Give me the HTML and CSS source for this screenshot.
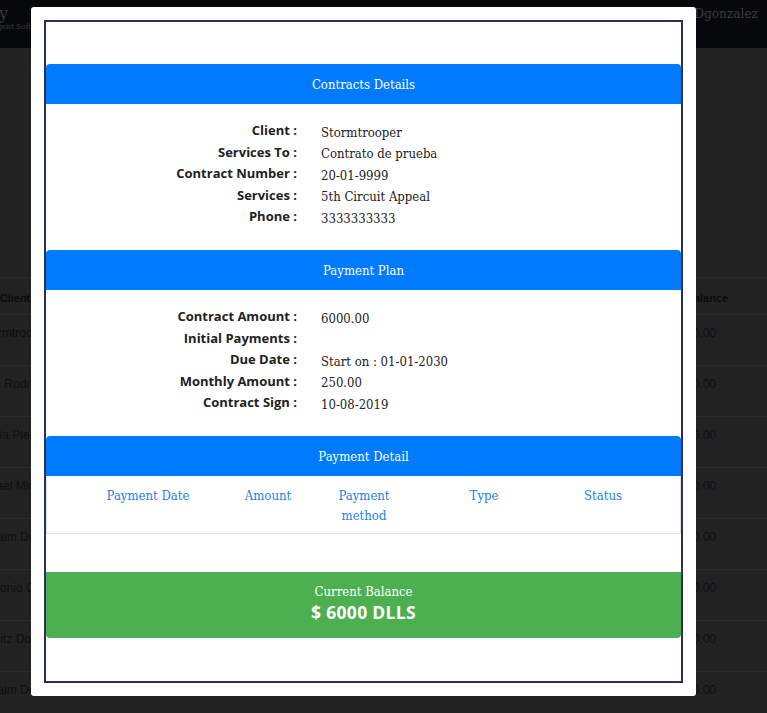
FILE: index.html
```html
<!DOCTYPE html>
<html lang="en">
<head>
<meta charset="utf-8">
<title>Contract</title>
<link rel="stylesheet" href="styles.css">
</head>
<body>
<div class="page">
  <header class="topbar">
    <div class="brand">
      <span class="brand-mark">y</span>
      <span class="brand-sub">Agent Soft</span>
    </div>
    <div class="user">Dgonzalez</div>
  </header>
  <main class="bg-table">
    <div class="bg-row bg-head"><div class="c1">Client</div><div class="c2">Balance</div></div>
    <div class="bg-row"><div class="c1">Stormtrooper</div><div class="c2">$0.00</div></div>
    <div class="bg-row"><div class="c1">Maria Rodriguez</div><div class="c2">$0.00</div></div>
    <div class="bg-row"><div class="c1">Sofia Pleitez</div><div class="c2">$0.00</div></div>
    <div class="bg-row"><div class="c1">Rafael Mirand</div><div class="c2">$0.00</div></div>
    <div class="bg-row"><div class="c1">Joaim Dom</div><div class="c2">$0.00</div></div>
    <div class="bg-row"><div class="c1">Antonio Cab</div><div class="c2">$0.00</div></div>
    <div class="bg-row"><div class="c1">Fritz Dom</div><div class="c2">$0.00</div></div>
    <div class="bg-row"><div class="c1">Joaim Dom</div><div class="c2">$0.00</div></div>
  </main>
</div>

<div class="modal">
  <div class="frame">
    <section class="sec">
      <div class="sec-head">Contracts Details</div>
      <div class="info">
        <div class="lbl">Client :</div><div class="val">Stormtrooper</div>
        <div class="lbl">Services To :</div><div class="val">Contrato de prueba</div>
        <div class="lbl">Contract Number :</div><div class="val">20-01-9999</div>
        <div class="lbl">Services :</div><div class="val">5th Circuit Appeal</div>
        <div class="lbl">Phone :</div><div class="val">3333333333</div>
      </div>
    </section>
    <section class="sec">
      <div class="sec-head">Payment Plan</div>
      <div class="info">
        <div class="lbl">Contract Amount :</div><div class="val">6000.00</div>
        <div class="lbl">Initial Payments :</div><div class="val"></div>
        <div class="lbl">Due Date :</div><div class="val">Start on : 01-01-2030</div>
        <div class="lbl">Monthly Amount :</div><div class="val">250.00</div>
        <div class="lbl">Contract Sign :</div><div class="val">10-08-2019</div>
      </div>
    </section>
    <section class="sec">
      <div class="sec-head">Payment Detail</div>
      <div class="pay-table">
        <div class="th col-date">Payment Date</div>
        <div class="th col-amount">Amount</div>
        <div class="th col-method">Payment method</div>
        <div class="th col-type">Type</div>
        <div class="th col-status">Status</div>
      </div>
    </section>
    <div class="balance">
      <div class="balance-title">Current Balance</div>
      <div class="balance-amount">$ 6000 DLLS</div>
    </div>
  </div>
</div>
</body>
</html>
```
FILE: styles.css
```css
html, body {
  margin: 0;
  padding: 0;
}
body {
  background: #222222;
  width: 767px;
  height: 713px;
  overflow: hidden;
  font-family: "Liberation Sans", Arial, sans-serif;
}

/* background page */
.topbar {
  height: 48px;
  background: #07080c;
  display: flex;
  justify-content: space-between;
  align-items: flex-start;
}
.brand {
  width: 31px;
  display: flex;
  flex-direction: column;
  align-items: flex-end;
  color: #3a3a3a;
  font-family: "DejaVu Serif Condensed", "DejaVu Serif", serif;
  white-space: nowrap;
}
.brand-mark {
  font-size: 17px;
  line-height: 18px;
  margin-top: 4px;
  margin-right: 23px;
}
.brand-sub {
  font-size: 8px;
  line-height: 10px;
  margin-top: 0;
}
.user {
  font-family: "DejaVu Serif Condensed", "DejaVu Serif", serif;
  font-stretch: condensed;
  font-size: 13.5px;
  line-height: 20px;
  color: #3b3b3b;
  padding: 3px 9px 0 0;
}

.bg-table {
  margin-top: 229px;
}
.bg-row {
  display: grid;
  grid-template-columns: 30px 656px 1fr;
  border-top: 1px solid #2b2b2b;
  height: 50px;
  box-sizing: content-box;
  font-size: 12px;
  color: #0d0f11;
  line-height: 16px;
}
.bg-row > div {
  padding-top: 10px;
  white-space: nowrap;
}
.bg-head {
  height: 36px;
  font-weight: bold;
  font-size: 11px;
  color: #0c0c0c;
}
.bg-head > div {
  padding-top: 12px;
}
.c1 {
  grid-column: 1;
  display: flex;
  justify-content: center;
}
.c2 {
  grid-column: 3;
}

/* modal */
.modal {
  position: fixed;
  left: 31px;
  top: 7px;
  width: 665px;
  height: 689px;
  background: #ffffff;
  border-radius: 3px;
  padding: 13px;
  box-sizing: border-box;
}
.frame {
  height: 100%;
  border: 2px solid #2b3154;
  box-sizing: border-box;
  padding-top: 42px;
  font-family: "DejaVu Serif Condensed", "DejaVu Serif", serif;
  font-stretch: condensed;
  color: #212529;
}
.sec-head {
  height: 40px;
  background: #007bff;
  color: #ffffff;
  border-radius: 4px 4px 0 0;
  display: flex;
  align-items: center;
  justify-content: center;
  font-size: 13px;
}
.info {
  display: grid;
  grid-template-columns: 251px 1fr;
  column-gap: 24px;
  grid-auto-rows: 21.5px;
  padding: 16px 0 22.5px;
}
.lbl {
  font-family: "Open Sans", "Liberation Sans", sans-serif;
  font-stretch: normal;
  font-weight: 700;
  font-size: 13px;
  line-height: 21.5px;
  text-align: right;
  color: #222;
}
.val {
  font-size: 13px;
  line-height: 21.5px;
  margin-top: 1.5px;
  color: #222;
}

.pay-table {
  display: grid;
  grid-template-columns: 96px 24px 96px 96px 24px 96px 23px 96px;
  padding: 10px 0 7px 53px;
  border: 1px solid #dee2e6;
  border-top: 0;
  height: 40px;
  box-sizing: content-box;
}
.th {
  color: #1f7fe8;
  font-size: 13px;
  line-height: 20px;
  text-align: center;
}
.col-date { grid-column: 1; }
.col-amount { grid-column: 3; }
.col-method { grid-column: 4; }
.col-type { grid-column: 6; }
.col-status { grid-column: 8; }

.balance {
  margin-top: 38px;
  height: 66px;
  box-sizing: border-box;
  padding-top: 10px;
  background: #4caf50;
  border-radius: 0 0 4px 4px;
  color: #ffffff;
  text-align: center;
}
.balance-title {
  font-size: 13px;
  line-height: 20px;
}
.balance-amount {
  font-family: "Open Sans", "Liberation Sans", sans-serif;
  font-stretch: normal;
  font-weight: 700;
  font-size: 17.5px;
  letter-spacing: 0.3px;
  line-height: 20px;
}
```
